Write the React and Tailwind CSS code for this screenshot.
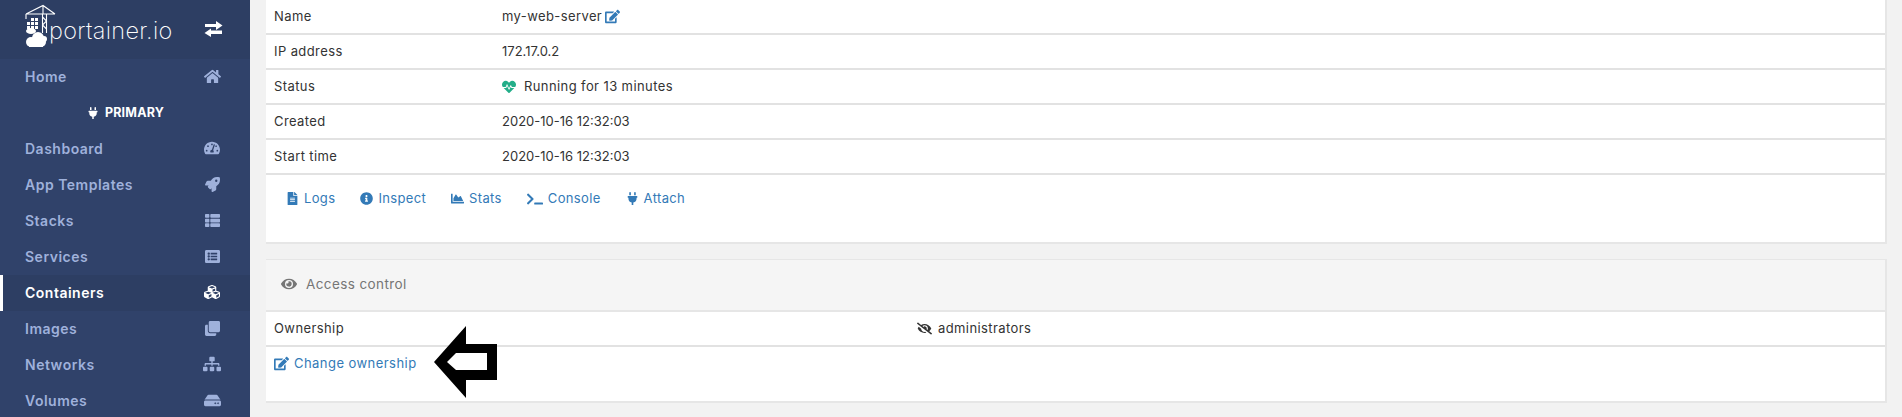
import React from "react";
import {
  FaChartArea, FaClone, FaCubes, FaEdit, FaEye, FaEyeSlash, FaFileAlt, FaHdd, FaHeartbeat, FaHome,
  FaInfoCircle, FaListAlt, FaPlug, FaRocket, FaSitemap, FaTachometerAlt, FaTerminal, FaThList,
} from "react-icons/fa";

const font = "font-['Inter','Noto_Sans',sans-serif]";

function NavItem({ label, icon: Icon, active, size = "text-[15px]" }) {
  return (
    <div className={`flex h-9 items-center justify-between pb-[2px] pl-[25px] pr-[28px] text-[14px] font-semibold tracking-[0.5px] ${active ? "border-l-[3px] border-white !pl-[22px] bg-[#2d3e63] text-white" : "text-[#9fb1db]"}`}>
      <span>{label}</span>
      <span className={`flex w-5 justify-center ${size}`}><Icon /></span>
    </div>
  );
}

function Logo() {
  return (
    <svg width="32" height="44" viewBox="25 4 32 44" className="shrink-0">
      <g fill="none" stroke="#fff" strokeWidth="1.1">
        <path d="M26 14 L43 5.5 L55 14 M26 14 H55 M26 14 V19 M43 5 V14" />
        <path d="M42.5 14 V33 M46.5 14 V33 M42.5 17 L46.5 21 L42.5 25 L46.5 29" />
      </g>
      <g fill="#fff">
        <rect x="31" y="18" width="3" height="3" /><rect x="35" y="18" width="3" height="3" />
        <rect x="27" y="22" width="3" height="3" /><rect x="31" y="22" width="3" height="3" /><rect x="35" y="22" width="3" height="3" />
        <rect x="27" y="26" width="3" height="3" /><rect x="31" y="26" width="3" height="3" /><rect x="35" y="26" width="3" height="3" />
        <ellipse cx="31" cy="31" rx="5" ry="3" />
        <circle cx="38" cy="38" r="6" /><circle cx="31" cy="42" r="5" /><circle cx="41" cy="42" r="5" />
        <circle cx="44" cy="39" r="3" /><rect x="29" y="41" width="14" height="6" />
      </g>
    </svg>
  );
}

function Row({ label, children }) {
  return (
    <div className="flex h-[35px] items-center border-b-2 border-[#e2e2e2] pl-2 text-[13px] tracking-[0.4px] text-[#333333]">
      <div className="w-[228px]">{label}</div>
      <div className="flex items-center">{children}</div>
    </div>
  );
}

function Action({ icon: Icon, label, iconSize = "text-[13px]" }) {
  return (
    <span className="flex items-center text-[13px] tracking-[0.35px] text-[#337ab7]">
      <Icon className={`mr-[5px] ${iconSize}`} />
      {label}
    </span>
  );
}

export default function App() {
  return (
    <div className={`relative flex h-[417px] w-[1902px] overflow-hidden bg-[#f2f2f2] ${font}`}>
      <aside className="w-[250px] shrink-0 bg-[#30426a]">
        <div className="relative flex h-[59px] items-start bg-[#2d3e63] pl-[25px] pt-[4px] text-white">
          <Logo />
          <span className="ml-[-8px] mt-[13px] text-[23.5px] font-extralight leading-[28px] tracking-[0.3px]">portainer.io</span>
          <svg className="absolute left-[204px] top-[21px]" width="19" height="16" viewBox="0 0 19 16" fill="#fff">
            <path d="M1 3 H12 V0 L18.5 4.5 L12 9 V6 H1 Z" />
            <path d="M18 9.5 H7 V7.5 L0.5 12 L7 16 V13 H18 Z" />
          </svg>
        </div>
        <NavItem label="Home" icon={FaHome} size="text-[17px]" />
        <div className="flex h-9 items-center justify-center pl-[1px] text-[12.5px] font-bold tracking-[0.2px] text-white">
          <FaPlug className="mr-[6px] text-[12px]" />
          PRIMARY
        </div>
        <NavItem label="Dashboard" icon={FaTachometerAlt} size="text-[16px]" />
        <NavItem label="App Templates" icon={FaRocket} />
        <NavItem label="Stacks" icon={FaThList} />
        <NavItem label="Services" icon={FaListAlt} />
        <NavItem label="Containers" icon={FaCubes} active size="text-[16px]" />
        <NavItem label="Images" icon={FaClone} />
        <NavItem label="Networks" icon={FaSitemap} size="text-[18px]" />
        <NavItem label="Volumes" icon={FaHdd} size="text-[17px]" />
      </aside>

      <main className="flex-1 pl-4 pr-[15px]">
        <section className="h-[244px] border-r-2 border-b-2 border-[#e6e6e6] bg-white">
          <Row label="Name">
            my-web-server
            <FaEdit className="ml-[3px] text-[15px] text-[#337ab7]" />
          </Row>
          <Row label="IP address"><span className="tracking-normal">172.17.0.2</span></Row>
          <Row label="Status">
            <FaHeartbeat className="mr-2 text-[14px] text-[#23ae89]" />
            Running for 13 minutes
          </Row>
          <Row label="Created"><span className="tracking-normal">2020-10-16 12:32:03</span></Row>
          <Row label="Start time"><span className="tracking-normal">2020-10-16 12:32:03</span></Row>
          <div className="flex gap-[25px] pl-[20px] pt-[14px]">
            <Action icon={FaFileAlt} label="Logs" />
            <Action icon={FaInfoCircle} label="Inspect" />
            <Action icon={FaChartArea} label="Stats" />
            <Action icon={FaTerminal} label="Console" iconSize="text-[16px]" />
            <Action icon={FaPlug} label="Attach" />
          </div>
        </section>

        <section className="mt-[15px] h-[144px] border-r-2 border-b-2 border-[#e6e6e6] bg-white">
          <div className="flex h-[53px] items-center border-t border-b-2 border-[#e6e6e6] bg-[#f5f5f5] pb-[2px] pl-[15px] text-[13.5px] tracking-[0.4px] text-[#767676]">
            <FaEye className="mr-[9px] text-[16px]" />
            Access control
          </div>
          <div className="flex h-[35px] items-center border-b-2 border-[#e2e2e2] pl-2 text-[13px] tracking-[0.4px] text-[#333333]">
            <div className="w-[643px]">Ownership</div>
            <div className="flex items-center">
              <FaEyeSlash className="mr-[6px] text-[15px]" />
              administrators
            </div>
          </div>
          <div className="flex items-center pl-2 pt-[7px] text-[13px] tracking-[0.45px] text-[#337ab7]">
            <FaEdit className="mr-[5px] text-[15px]" />
            Change ownership
          </div>
        </section>
      </main>

      <svg className="absolute left-[430px] top-[322px]" width="72" height="80" viewBox="430 322 72 80">
        <polygon points="434,362 466,326 466,344 497,344 497,380 466,380 466,398" fill="#000" />
        <polygon points="447,362 456,353 487,353 487,370 456,370" fill="#fff" />
      </svg>
    </div>
  );
}
